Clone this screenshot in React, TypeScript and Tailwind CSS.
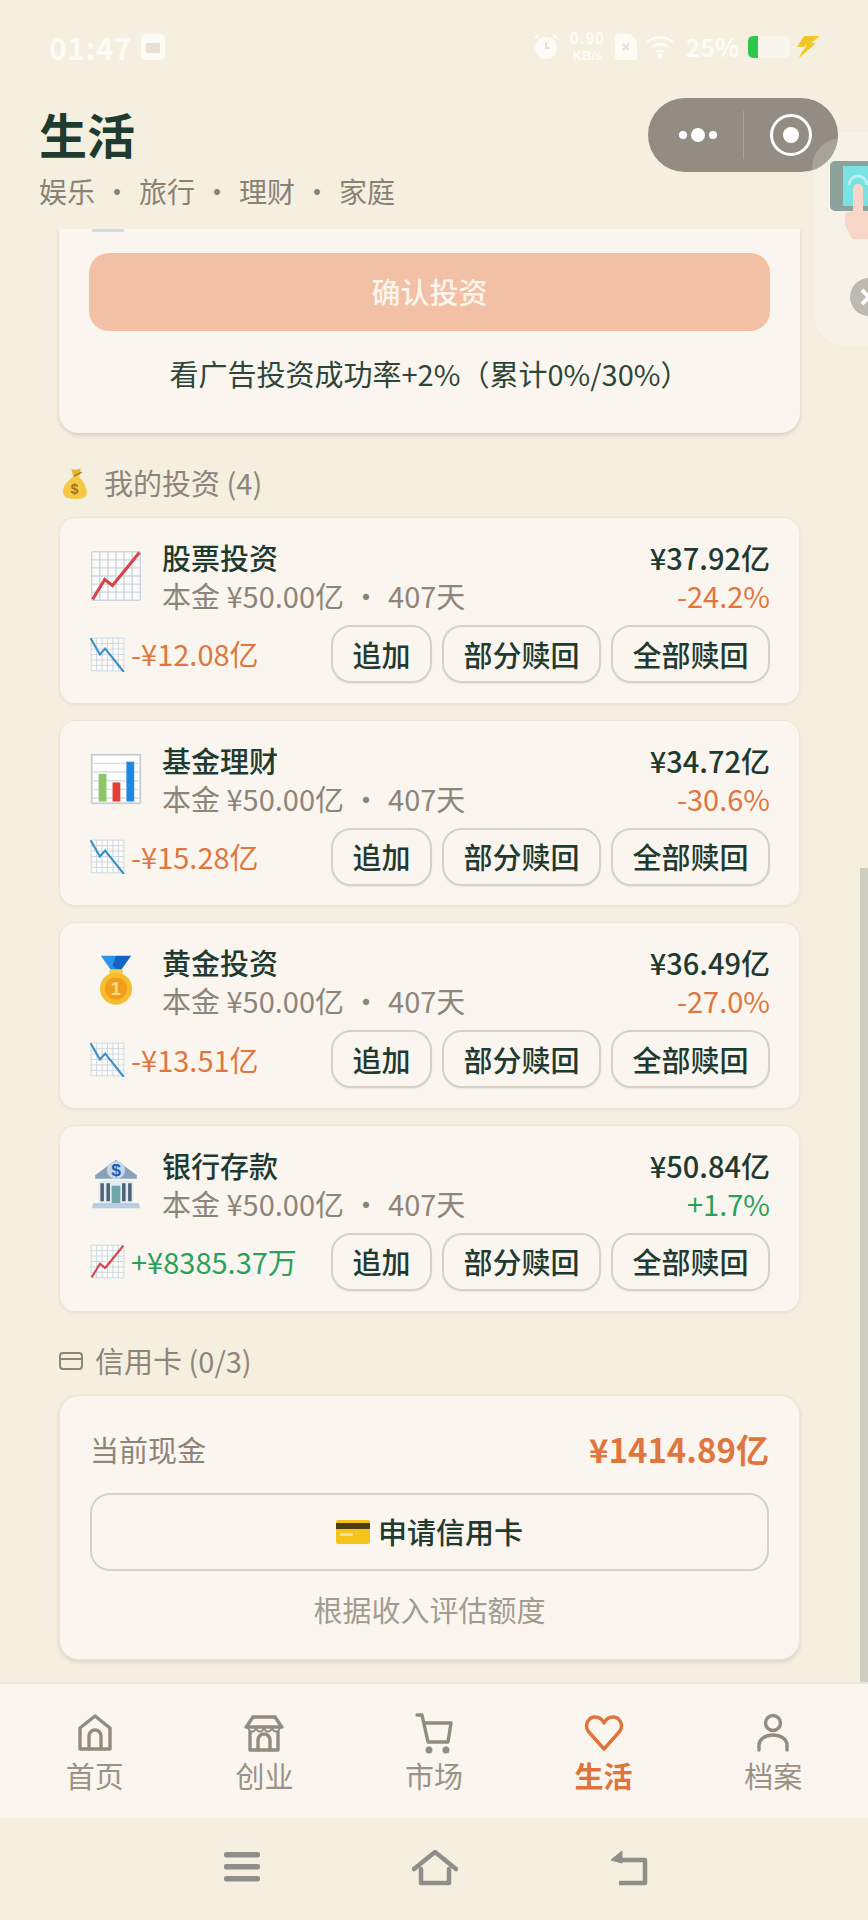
import React from "react";

const Grid = ({ n = 6 }: { n?: number }) => {
  const l = [];
  for (let i = 0; i <= n; i++) {
    const p = 2 + (i * 28) / n;
    l.push(<path key={i} d={`M${p} 2V30M2 ${p}H30`} stroke="#c9d6e2" strokeWidth="0.8" fill="none" />);
  }
  return <><rect x="2" y="2" width="28" height="28" fill="#fff" fillOpacity="0.5" />{l}</>;
};

const ChartUp = ({ s = 52 }: { s?: number }) => (
  <svg width={s} height={s} viewBox="1 1 30 30"><Grid />
    <path d="M2.5 29.5 L9.5 18 L14 21.5 L29.5 2.5" stroke="#d4454c" strokeWidth="1.8" fill="none" />
  </svg>
);
const ChartDown = ({ s = 35 }: { s?: number }) => (
  <svg width={s} height={s} viewBox="1 1 30 30"><Grid />
    <path d="M1.5 2 L9.5 16 L14 11 L30 31" stroke="#3a8fc4" strokeWidth="1.8" fill="none" />
  </svg>
);
const Bars = () => (
  <svg width="52" height="52" viewBox="1 1 30 30">
    <rect x="2" y="2" width="28" height="28" fill="#fff" stroke="#c6cdd4" strokeWidth="1" />
    <path d="M2 7H30M2 12H30M2 17H30M2 22H30M2 27H30" stroke="#d6dde3" strokeWidth="0.8" />
    <rect x="6" y="13" width="4.5" height="16" fill="#8cc665" />
    <rect x="14" y="18" width="4.5" height="11" fill="#e53e36" />
    <rect x="22" y="6" width="4.5" height="23" fill="#1e88e5" />
  </svg>
);
const Medal = () => (
  <svg width="54" height="54" viewBox="0 0 32 32">
    <path d="M7 1 H16 L20 11 H14Z" fill="#2b93ea" />
    <path d="M25 1 H16 L14 7 L18 11Z" fill="#1565c0" />
    <rect x="12" y="9" width="8" height="3" rx="1" fill="#f3cd4a" />
    <circle cx="16" cy="20.5" r="9.5" fill="#f6bd2e" />
    <circle cx="16" cy="20.5" r="6.6" fill="#f09f1c" />
    <text x="16" y="24.5" textAnchor="middle" fontSize="11" fontWeight="700" fill="#fbdc82" fontFamily="Liberation Sans, sans-serif">1</text>
  </svg>
);
const Bank = () => (
  <svg width="52" height="52" viewBox="2 1 28 30">
    <path d="M16 2 L28 11 V13 H4 V11Z" fill="#8aa0b6" />
    <circle cx="16" cy="8" r="5.2" fill="#c9d8e6" />
    <text x="16" y="11.6" textAnchor="middle" fontSize="10" fontWeight="700" fill="#1e5fb8" fontFamily="Liberation Sans, sans-serif">$</text>
    <rect x="6" y="14" width="20" height="13" fill="#e3ecf3" />
    <path d="M8 15.5V26M11.5 15.5V26M20.5 15.5V26M24 15.5V26" stroke="#4c6277" strokeWidth="2" />
    <rect x="13.5" y="17" width="5" height="10" fill="#6fa7ad" />
    <path d="M3 27 H29 L30 30 H2Z" fill="#b9cde0" />
  </svg>
);
const MoneyBag = () => (
  <svg width="33" height="33" viewBox="0 0 32 32">
    <path d="M15 9 C6 14 3 21 4 26 C5 30 10 31 16 31 C22 31 27 30 27 25 C27 19 23 13 19 9Z" fill="#f6c945" />
    <path d="M13 6 L12 2 C15 3 19 3 21 1 L20 8 L15 10Z" fill="#e8b52e" />
    <path d="M14 9 L22 5" stroke="#a9791a" strokeWidth="1.3" />
    <text x="15" y="26" textAnchor="middle" fontSize="14" fontWeight="700" fill="#a0741d" fontFamily="Liberation Sans, sans-serif">$</text>
  </svg>
);
const CardEmoji = () => (
  <svg width="34" height="26" viewBox="0 0 34 26">
    <rect y="1" width="34" height="24" rx="2" fill="#f6c21c" />
    <rect y="4" width="34" height="6" fill="#4c3d13" />
    <rect x="4" y="14" width="13" height="3" fill="#e7e0b0" />
  </svg>
);

const tiles = [
  { icon: <ChartUp />, name: "股票投资", val: "¥37.92亿", pct: "-24.2%", diff: "-¥12.08亿", up: false },
  { icon: <Bars />, name: "基金理财", val: "¥34.72亿", pct: "-30.6%", diff: "-¥15.28亿", up: false },
  { icon: <Medal />, name: "黄金投资", val: "¥36.49亿", pct: "-27.0%", diff: "-¥13.51亿", up: false },
  { icon: <Bank />, name: "银行存款", val: "¥50.84亿", pct: "+1.7%", diff: "+¥8385.37万", up: true },
];

const Btn = ({ t }: { t: string }) => (
  <button className="h-[58px] px-[19.5px] rounded-[20px] border-2 border-[#d5d1c7] bg-[#faf6ef] text-[#1f3a30] text-[29px] font-medium leading-none shadow-[0_1px_2px_rgba(0,0,0,0.06)]">{t}</button>
);

const Tile = ({ d }: { d: (typeof tiles)[number] }) => (
  <div className="h-[186.67px] rounded-[16px] bg-[#faf6ef] border border-[#ebe6da] shadow-[0_1px_3px_rgba(0,0,0,0.06)] pl-[29px] pr-[29px] pt-[20px]">
    <div className="flex items-center justify-between">
      <div className="flex items-center gap-[19px]">
        <div className="w-[54px] h-[54px] flex items-center justify-center">{d.icon}</div>
        <div>
          <div className="text-[#1f3a30] text-[29px] leading-[38px] font-medium">{d.name}</div>
          <div className="text-[#8d8579] text-[29px] leading-[38px]">本金 ¥50.00亿<span className="inline-block w-[44px] text-center">·</span>407天</div>
        </div>
      </div>
      <div className="text-right">
        <div className="text-[#1f3a30] text-[29px] leading-[38px] font-medium">{d.val}</div>
        <div className={`text-[29px] leading-[38px] ${d.up ? "text-[#2ba05c]" : "text-[#e0763f]"}`}>{d.pct}</div>
      </div>
    </div>
    <div className="flex items-center justify-between mt-[11px]">
      <div className={`flex items-center gap-[6px] text-[29px] ${d.up ? "text-[#2ba05c]" : "text-[#e0763f]"}`}>
        <div className="ml-[1px]">{d.up ? <ChartUp s={35} /> : <ChartDown />}</div>
        <span>{d.diff}</span>
      </div>
      <div className="flex gap-[10px]">
        <Btn t="追加" /><Btn t="部分赎回" /><Btn t="全部赎回" />
      </div>
    </div>
  </div>
);

const Nav = ({ icon, t, on }: { icon: React.ReactNode; t: string; on?: boolean }) => (
  <div className={`flex-1 flex flex-col items-center ${on ? "text-[#e0733a] font-bold" : "text-[#9a9287]"}`}>
    <div className="h-[44px] w-[44px] flex items-center justify-center">{icon}</div>
    <div className="text-[29px] leading-[34px] mt-[3px]">{t}</div>
  </div>
);

const Sv = ({ children, c = "#948b7f" }: { children: React.ReactNode; c?: string }) => (
  <svg width="42" height="42" viewBox="0 0 42 42" fill="none" stroke={c} strokeWidth="3.4" strokeLinecap="round" strokeLinejoin="round">{children}</svg>
);

export default function App() {
  return (
    <div className="relative w-[868px] h-[1920px] overflow-hidden bg-[#f5efe0] flex flex-col" style={{ fontFamily: '"Noto Sans CJK SC", "Noto Sans", sans-serif' }}>
      {/* status bar */}
      <div className="h-[94px] flex items-center justify-between pl-[49px] pr-[48px] text-[#fdfbf5]">
        <div className="flex items-center gap-[9px]">
          <span className="text-[30px] font-bold tracking-[0.5px]">01:47</span>
          <svg width="24" height="26" viewBox="0 0 24 26"><rect width="24" height="26" rx="5" fill="#fdfbf5" /><rect x="5" y="9" width="14" height="10" fill="#e6e0d2" /></svg>
        </div>
        <div className="flex items-center gap-[8px]">
          <svg width="26" height="28" viewBox="0 0 26 28"><circle cx="13" cy="15" r="11" fill="#fdfbf5" /><path d="M13 9v6h4" stroke="#e6e0d2" strokeWidth="2" fill="none" /><path d="M2 5l4-3M24 5l-4-3" stroke="#fdfbf5" strokeWidth="2.5" /></svg>
          <div className="flex flex-col items-center font-bold w-[40px] font-['Liberation_Sans']"><span className="text-[16px] leading-[18px] tracking-[1px]">0.90</span><span className="text-[13px] leading-[16px]">KB/s</span></div>
          <svg width="22" height="26" viewBox="0 0 22 26"><path d="M3 0H15L22 7V23a3 3 0 0 1-3 3H3a3 3 0 0 1-3-3V3a3 3 0 0 1 3-3Z" fill="#fdfbf5" /><path d="M8 10l6 6M14 10l-6 6" stroke="#e6e0d2" strokeWidth="1.8" /></svg>
          <svg width="30" height="24" viewBox="0 0 30 24" fill="none" stroke="#fdfbf5" strokeWidth="2.6"><path d="M2 7C9 1 21 1 28 7" /><path d="M7 12C12 8 18 8 23 12" /><path d="M11 17C13 15 17 15 19 17" /><circle cx="15" cy="21" r="1.5" fill="#fdfbf5" /></svg>
          <span className="text-[25px] font-bold ml-[2px]">25%</span>
          <div className="w-[42px] h-[22px] rounded-[5px] bg-[#f8f5ec] overflow-hidden ml-[1px]"><div className="w-[10px] h-full bg-[#2dc94e]" /></div>
          <svg width="24" height="24" viewBox="0 0 24 24" className="-ml-[2px]"><path d="M8 1H24L15 8H20L3 23L8 12H1Z" fill="#f3c623" /><path d="M10 10 6 16" stroke="#f5efe0" strokeWidth="1.4" /></svg>
        </div>
      </div>

      {/* header */}
      <div className="h-[135px] flex items-start justify-between pl-[39px] pr-[30px]">
        <div>
          <div className="text-[#1d3b2f] text-[48px] leading-[56px] font-bold mt-[11px]">生活</div>
          <div className="text-[#8a8175] text-[28px] leading-[40px] mt-[10px]">娱乐<span className="inline-block w-[44px] text-center">·</span>旅行<span className="inline-block w-[44px] text-center">·</span>理财<span className="inline-block w-[44px] text-center">·</span>家庭</div>
        </div>
        <div className="mt-[4px] w-[190px] h-[74px] rounded-full bg-[#928c82] flex items-center relative z-10 overflow-hidden">
          <div className="flex-1 flex items-center justify-center gap-[4px] pl-[4px]">
            <span className="w-[8px] h-[8px] rounded-full bg-white" /><span className="w-[14px] h-[14px] rounded-full bg-white" /><span className="w-[8px] h-[8px] rounded-full bg-white" />
          </div>
          <div className="w-[1px] h-[48px] bg-[#aaa59c]" />
          <div className="w-[94px] flex items-center justify-center">
            <div className="w-[42px] h-[42px] rounded-full border-[3px] border-white flex items-center justify-center"><div className="w-[16px] h-[16px] rounded-full bg-white" /></div>
          </div>
          <div className="absolute left-[164px] top-[40px] w-[60px] h-[60px] rounded-full bg-[#a8a399]" />
        </div>
      </div>

      {/* scrolling content */}
      <div className="relative flex-1 min-h-0 overflow-hidden px-[59px] pr-[68px]">
        <div className="h-[204px] rounded-b-[20px] bg-[#faf6ef] shadow-[0_2px_4px_rgba(0,0,0,0.14)] px-[30px] pt-[24px] relative">
          <div className="absolute left-[33px] top-0 w-[32px] h-[3px] bg-[#cfdde6]" />
          <div className="h-[78px] rounded-[20px] bg-[#f2c0a5] text-[#fdf5ec] text-[29px] font-medium flex items-center justify-center">确认投资</div>
          <div className="text-[#2d4639] text-[29px] leading-[40px] text-center mt-[22px]">看广告投资成功率+2%（累计0%/30%）</div>
        </div>
        <div className="flex items-center gap-[12px] h-[40px] mt-[30px] text-[#8d8579] text-[29px]"><MoneyBag /><span>我的投资 (4)</span></div>
        <div className="mt-[14px] flex flex-col gap-[16px]">
          {tiles.map((d) => <Tile key={d.name} d={d} />)}
        </div>
        <div className="flex items-center gap-[12px] h-[40px] mt-[29px] text-[#8d8579] text-[29px]">
          <svg width="24" height="20" viewBox="0 0 24 20" fill="none" stroke="#8d8579" strokeWidth="2"><rect x="1" y="2" width="22" height="16" rx="3" /><path d="M1 8H23" /></svg>
          <span>信用卡 (0/3)</span>
        </div>
        <div className="mt-[14px] h-[265px] rounded-[20px] bg-[#faf6ef] border border-[#ebe6da] shadow-[0_2px_4px_rgba(0,0,0,0.12)] px-[30px] pt-[32px]">
          <div className="flex items-center justify-between h-[44px]">
            <span className="text-[#8d8579] text-[29px]">当前现金</span>
            <span className="text-[#e0763f] text-[33px] font-bold">¥1414.89亿</span>
          </div>
          <div className="mt-[21px] h-[78px] rounded-[20px] border-2 border-[#d5d1c7] flex items-center justify-center gap-[8px] text-[#1f3a30] text-[29px] font-medium"><CardEmoji /><span>申请信用卡</span></div>
          <div className="text-[#a39b90] text-[29px] leading-[40px] text-center mt-[18px]">根据收入评估额度</div>
        </div>
        {/* scrollbar */}
        <div className="absolute right-0 top-[639px] bottom-0 w-[8px] bg-[#cdcec1]" />
      </div>

      {/* tab bar */}
      <div className="h-[136px] shrink-0 bg-[#faf6ef] border-t-2 border-[#e9e5d9] flex items-start px-[10px] pt-[27px]">
        <Nav t="首页" icon={<Sv><path d="M6 37V16L21 4l15 12v21Z" /><path d="M15 37V24a6 6 0 0 1 12 0v13" /></Sv>} />
        <Nav t="创业" icon={<Sv><path d="M4 14 10 5H32L38 14" /><path d="M3 15H39" /><path d="M5 16C7 21 11 21 13 16 15 21 19 21 21 16 23 21 27 21 29 16 31 21 35 21 37 16" strokeWidth="2" /><path d="M7 20V38H35V20" /><path d="M15 38V28a6 6 0 0 1 12 0v10" /></Sv>} />
        <Nav t="市场" icon={<Sv><path d="M4 3H9L15 30H35L38 11H11" /><circle cx="16" cy="38" r="1.8" fill="#948b7f" /><circle cx="33" cy="38" r="1.8" fill="#948b7f" /></Sv>} />
        <Nav on t="生活" icon={<Sv c="#e0733a"><path d="M21 37 5 19C1 12 6 5 12 5c4 0 7 2 9 6 2-4 5-6 9-6 6 0 11 7 7 14Z" /></Sv>} />
        <Nav t="档案" icon={<Sv><circle cx="21" cy="11" r="7.5" /><path d="M7 38v-5a14 10 0 0 1 28 0v5" /></Sv>} />
      </div>

      {/* system nav */}
      <div className="h-[102px] shrink-0 flex items-start justify-center gap-[151px] pt-[32px] pl-[3px]">
        <svg width="38" height="34" viewBox="0 0 38 34" fill="#8e8e8a"><rect x="1" y="2" width="36" height="5.5" rx="2" /><rect x="1" y="14" width="36" height="5.5" rx="2" /><rect x="1" y="26" width="36" height="5.5" rx="2" /></svg>
        <svg width="46" height="36" viewBox="0 0 46 36" fill="none" stroke="#8e8e8a" strokeWidth="4.5" strokeLinecap="round" strokeLinejoin="round"><path d="M2 19 23 2 44 19" /><path d="M9 19V33H37V19" /></svg>
        <svg width="40" height="36" viewBox="0 0 40 36" fill="none" stroke="#8e8e8a" strokeWidth="4.5" strokeLinejoin="round"><path d="M9 10H36V33H10" /><path d="M13 1 2 10 13 13Z" fill="#8e8e8a" strokeWidth="1" /></svg>
      </div>

      {/* floating widget */}
      <div className="absolute left-[812px] top-[130px] w-[80px] h-[218px] rounded-l-[36px] bg-[#f7f2e7] border border-[#f1ecdf] z-0">
        <svg width="40" height="80" viewBox="0 0 40 80" className="absolute left-[17px] top-[30px]">
          <rect x="0" y="0" width="50" height="50" rx="5" fill="#8ea29c" />
          <rect x="13" y="5" width="27" height="40" fill="#7be2e4" />
          <path d="M19 24a9 9 0 0 1 18 0" stroke="#b6f0ee" strokeWidth="3" fill="none" />
          <path d="M23 28a5 5 0 0 1 10 0V50H40V78H22L15 64V52L23 50Z" fill="#f7d5c7" />
        </svg>
        <div className="absolute left-[37px] top-[147px] w-[38px] h-[38px] rounded-full bg-[#bdbab2] flex items-center justify-center"><svg width="20" height="20" viewBox="0 0 20 20" stroke="#fff" strokeWidth="4"><path d="M3 3 17 17M17 3 3 17" /></svg></div>
      </div>
    </div>
  );
}
